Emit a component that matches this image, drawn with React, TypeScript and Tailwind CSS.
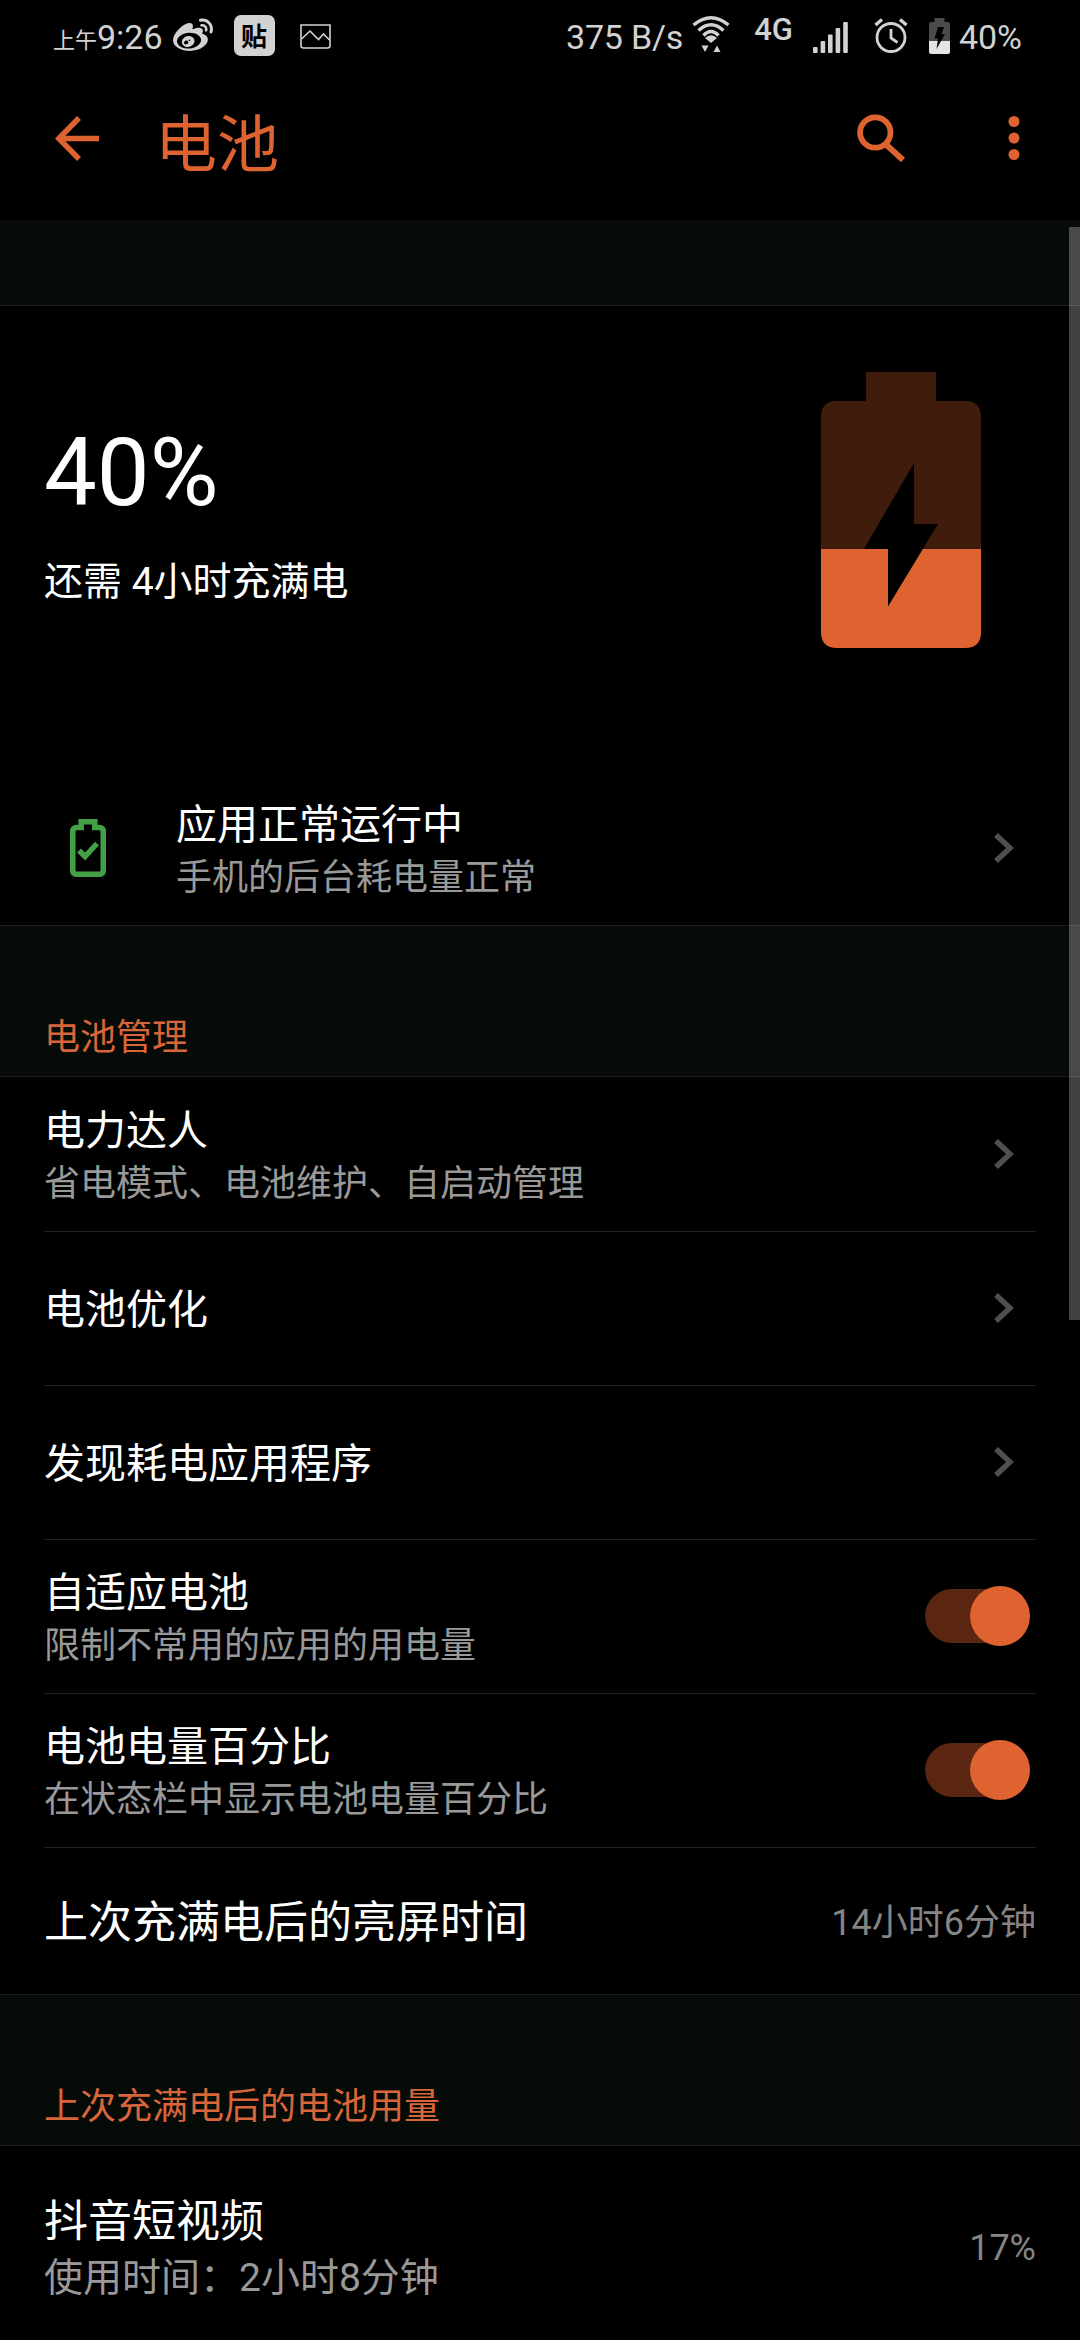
import React from "react";
import { FaWeibo } from "react-icons/fa";

interface RowProps {
  title: string;
  summary?: string;
  children?: React.ReactNode;
}

const Chevron: React.FC = () => (
  <svg className="mr-[22px] shrink-0" width="20" height="32" viewBox="0 0 20 32">
    <path d="M2 3L16 16L2 29" fill="none" stroke="#4f4f4f" strokeWidth="5.500" />
  </svg>
);

const Toggle: React.FC = () => (
  <div className="mr-1.5 flex h-[60px] w-[105px] shrink-0 items-center">
    <div className="h-[54px] w-[90px] rounded-full bg-[#5a2612]" />
    <div className="-ml-[45px] size-[60px] shrink-0 rounded-full bg-[#de6331]" />
  </div>
);

const Row: React.FC<RowProps> = ({ title, summary, children }) => {
  return (
    <div className="mx-11 flex h-[154px] items-center justify-between border-b border-[#212121] pb-px">
      <div className={summary ? "pt-2" : "pt-1"}>
        <div className="text-[41px] leading-[52px] text-white">{title}</div>
        {summary && <div className="text-[36px] leading-[55px] text-[#999999]">{summary}</div>}
      </div>
      {children}
    </div>
  );
};

const SectionHeader: React.FC<{ title: string }> = ({ title }) => (
  <div className="flex h-[152px] items-end border-y border-[#1c1f1d] bg-[#060b07] px-11 pb-[14px]">
    <h2 className="text-[36px] leading-[48px] text-[#d9653a]">{title}</h2>
  </div>
);

const StatusBar: React.FC = () => {
  return (
    <div className="flex h-[72px] justify-between pr-[58px] pl-[53px] text-[34px] leading-[75px] text-[#d2d2d2]">
      <div className="flex">
        <span className="text-[22px] leading-[82px]">上午</span>
        <span>9:26</span>
        <FaWeibo className="mt-[16px] ml-[10px] size-10" />
        <span className="mt-[15px] ml-[21px] flex size-[41px] items-center justify-center rounded-[7px] bg-[#d2d2d2] pt-0.5 text-[26px] leading-none font-bold text-black">
          贴
        </span>
        <svg className="mt-6 ml-[25px]" width="31" height="25" viewBox="0 0 31 25" fill="none" stroke="currentColor" strokeWidth="1.6">
          <path d="M1 1H30V21.5Q30 24 27.5 24H3.5Q1 24 1 21.5Z" />
          <path d="M1.5 15L10 7L18.500 15.500L23.500 10L29.500 16" />
        </svg>
      </div>
      <div className="flex">
        <span className="tracking-[-0.2px]">375 B/s</span>
        <svg className="mt-[15px] ml-[9px]" width="38" height="38" viewBox="0 0 38 38" fill="none" stroke="currentColor" strokeWidth="3.400">
          <path d="M1.500 10Q19 -4.500 36.500 10" />
          <path d="M6.500 15.500Q19 4 31.500 15.500" />
          <path d="M11.500 20.500Q19 12.500 26.500 20.500" />
          <path d="M13 23Q19 17.500 25 23L19 28Z" fill="currentColor" stroke="none" />
          <path d="M9.500 30.500H16.500L13 37Z M21.500 37H28.500L25 30.500Z" fill="currentColor" stroke="none" />
        </svg>
        <span className="ml-[24px] text-[31px] leading-[60px] font-medium">4G</span>
        <svg className="mt-[22px] ml-[20px]" width="35" height="31" viewBox="0 0 35 31" fill="currentColor">
          <rect x="0" y="25" width="4.600" height="6" rx="1" />
          <rect x="7.600" y="19" width="4.600" height="12" rx="1" />
          <rect x="15" y="12.500" width="4.600" height="18.500" rx="1" />
          <rect x="22.600" y="6" width="4.600" height="25" rx="1" />
          <rect x="30.200" y="0" width="4.600" height="31" rx="1" />
        </svg>
        <svg className="mt-[17px] ml-[26px]" width="34" height="36" viewBox="0 0 34 36" fill="none" stroke="currentColor" strokeWidth="2.800">
          <circle cx="17" cy="20.500" r="14" />
          <path d="M17 12V21L23.500 25.500" />
          <path d="M1.500 8L8 2.500M32.500 8L26 2.500" strokeWidth="3.500" />
        </svg>
        <svg className="mt-[18px] ml-[21px]" width="21" height="36" viewBox="0 0 21 36">
          <path d="M5.500 0H15.500V4H19Q21 4 21 6V23H0V6Q0 4 2 4H5.500Z" fill="#4a4a4a" />
          <path d="M0 23H21V34Q21 36 19 36H2Q0 36 0 34Z" fill="#e4e4e4" />
          <path d="M9 9H15L12.500 16H16L7.500 31L9 20.500H5.500Z" fill="#000" />
        </svg>
        <span className="ml-[9px]">40%</span>
      </div>
    </div>
  );
};

const AppBar: React.FC = () => {
  return (
    <div className="mb-4 flex h-[132px] items-center pr-[60px] pl-[55px] text-[#de6331]">
      <svg width="45" height="45" viewBox="0 0 45 45" fill="none" stroke="currentColor" strokeWidth="5.500">
        <path d="M44 22.500H4M24 2L3.800 22.500L24 43" />
      </svg>
      <h1 className="ml-[55px] grow pt-4 text-[62px] leading-[72px]">电池</h1>
      <svg width="48" height="48" viewBox="0 0 48 48" fill="none" stroke="currentColor">
        <circle cx="18.300" cy="18.500" r="15.200" strokeWidth="5.800" />
        <path d="M29 30.500L46 46" strokeWidth="6" />
      </svg>
      <svg className="ml-[103px]" width="12" height="46" viewBox="0 0 12 46" fill="currentColor">
        <circle cx="6" cy="6.500" r="5.500" />
        <circle cx="6" cy="23" r="5.500" />
        <circle cx="6" cy="39.500" r="5.500" />
      </svg>
    </div>
  );
};

const BatterySummary: React.FC = () => {
  return (
    <div className="flex h-[465px] justify-between pr-[99px] pl-11">
      <div className="pt-[111px]">
        <div className="text-[94px] leading-[112px]">40%</div>
        <div className="mt-[23px] text-[39px] leading-[60px]">还需 4小时充满电</div>
      </div>
      <svg className="mt-[66px]" width="160" height="276" viewBox="0 0 160 276">
        <path d="M45 0H115V29H144Q160 29 160 45V177H0V45Q0 29 16 29H45Z" fill="#401c0c" />
        <path d="M0 177H160V260Q160 276 144 276H16Q0 276 0 260Z" fill="#de6331" />
        <path d="M93 91V152H117L67 234.500V177H43Z" fill="#000" />
      </svg>
    </div>
  );
};

const App: React.FC = () => {
  return (
    <div
      lang="zh-CN"
      className="relative h-[2340px] w-[1080px] overflow-hidden bg-black font-[Roboto,'Noto_Sans_CJK_SC',sans-serif] whitespace-nowrap text-white"
    >
      <StatusBar />
      <AppBar />
      <div className="h-[86px] border-b border-[#1f2120] bg-[#060b07]" />
      <BatterySummary />

      <div className="flex h-[154px] items-center pr-11 pl-[70px]">
        <svg width="36" height="58" viewBox="0 0 36 58" fill="none" stroke="#43a047" strokeWidth="5.500">
          <path d="M11.200 8.500V2.750H24.800V8.500H29Q33.250 8.500 33.250 12.500V51.500Q33.250 55.250 29.500 55.250H6.500Q2.750 55.250 2.750 51.500V12.500Q2.750 8.500 7 8.500Z" />
          <path d="M9 31.500L15 37.500L27 24.500" />
        </svg>
        <div className="ml-[70px] grow pt-2">
          <div className="text-[41px] leading-[52px]">应用正常运行中</div>
          <div className="text-[36px] leading-[55px] text-[#999999]">手机的后台耗电量正常</div>
        </div>
        <Chevron />
      </div>

      <SectionHeader title="电池管理" />
      <div className="pt-px">
        <Row title="电力达人" summary="省电模式、电池维护、自启动管理">
          <Chevron />
        </Row>
        <Row title="电池优化">
          <Chevron />
        </Row>
        <Row title="发现耗电应用程序">
          <Chevron />
        </Row>
        <Row title="自适应电池" summary="限制不常用的应用的用电量">
          <Toggle />
        </Row>
        <Row title="电池电量百分比" summary="在状态栏中显示电池电量百分比">
          <Toggle />
        </Row>
        <div className="flex h-[146px] items-center justify-between px-11 pt-1">
          <span className="text-[44px] leading-[56px]">上次充满电后的亮屏时间</span>
          <span className="text-[36px] leading-[56px] text-[#858585]">14小时6分钟</span>
        </div>
      </div>

      <SectionHeader title="上次充满电后的电池用量" />
      <div className="flex h-[194px] items-center justify-between px-11 pt-[9px]">
        <div className="pt-0.5">
          <div className="text-[44px] leading-[58px]">抖音短视频</div>
          <div className="text-[39px] leading-[54px] text-[#999999]">使用时间：2小时8分钟</div>
        </div>
        <span className="text-[36px] leading-[56px] text-[#858585]">17%</span>
      </div>

      {/* scrollbar thumb */}
      <div className="absolute top-[227px] right-0 h-[1093px] w-[11px] bg-white/26" />
    </div>
  );
};

export default App;
